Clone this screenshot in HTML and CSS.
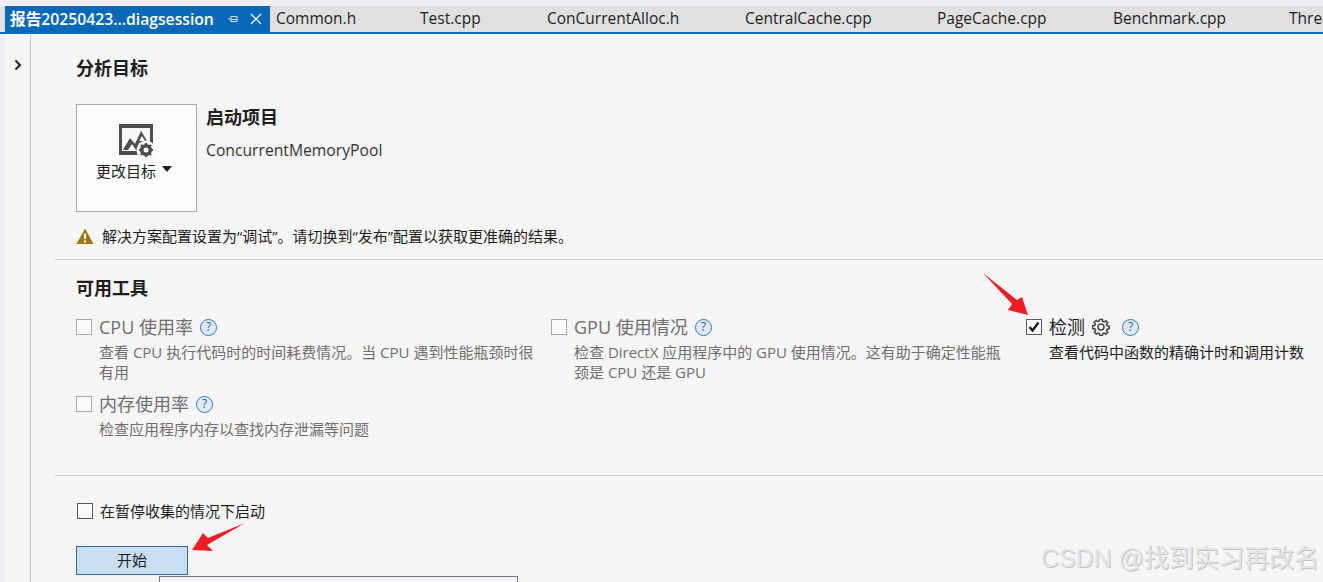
FILE: index.html
```html
<!DOCTYPE html>
<html lang="zh-CN">
<head>
<meta charset="utf-8">
<title>报告</title>
<link rel="stylesheet" href="styles.css">
</head>
<body>
<div class="tabs">
  <div class="tab-active">
    <span class="tab-active-name">报告20250423...diagsession</span>
    <svg class="pin" width="12" height="12" viewBox="0 0 12 12"><path d="M1 6h3M4 3v6M4 3.500h6v5H4M4 6.500h6" fill="none" stroke="#cfe3f5" stroke-width="1"/></svg>
    <svg class="close" width="12" height="12" viewBox="0 0 12 12"><path d="M1 1l10 10M11 1L1 11" fill="none" stroke="#e8f1fa" stroke-width="1.300"/></svg>
  </div>
  <span class="tab t1">Common.h</span>
  <span class="tab t2">Test.cpp</span>
  <span class="tab t3">ConCurrentAlloc.h</span>
  <span class="tab t4">CentralCache.cpp</span>
  <span class="tab t5">PageCache.cpp</span>
  <span class="tab t6">Benchmark.cpp</span>
  <span class="tab t7">ThreadCache.cpp</span>
</div>
<div class="body">
  <aside class="rail">
    <svg width="10" height="12" viewBox="0 0 10 12"><path d="M2.500 1.500L7 6l-4.500 4.500" fill="none" stroke="#1e1e1e" stroke-width="2"/></svg>
  </aside>
  <main class="main">
    <section class="target">
      <h2 class="heading">分析目标</h2>
      <div class="target-row">
        <div class="target-box">
          <svg class="target-icon" width="38" height="36" viewBox="0 0 38 36">
            <path d="M1 1h34v31H1z" fill="#4d4d4d"/>
            <path d="M4 5h28v23H4z" fill="#f8f8f8"/>
            <path d="M5 27l7-12 5 6 6-13 8 13v6z" fill="#4d4d4d"/>
            <path d="M10 27l4-6 4 6zM21 18l3-5 3 5z" fill="#f8f8f8"/>
            <circle cx="28" cy="27" r="9.500" fill="#f8f8f8"/>
            <circle cx="28" cy="27" r="4.600" fill="none" stroke="#4d4d4d" stroke-width="3"/>
            <path d="M28 20v14M21 27h14M23 22l10 10M33 22L23 32" stroke="#4d4d4d" stroke-width="2.200"/>
            <circle cx="28" cy="27" r="2.500" fill="#f8f8f8"/>
          </svg>
          <div class="target-label">更改目标<span class="caret"></span></div>
        </div>
        <div class="target-info">
          <div class="project-title">启动项目</div>
          <div class="project-name">ConcurrentMemoryPool</div>
        </div>
      </div>
      <div class="warning">
        <svg width="18" height="16" viewBox="0 0 18 16"><path d="M9 0.500L17.500 16H0.500z" fill="#9a7a0a"/><path d="M8 5.500h2v5.500H8zM8 12.500h2v2H8z" fill="#fff"/></svg>
        <span>解决方案配置设置为“调试”。请切换到“发布”配置以获取更准确的结果。</span>
      </div>
    </section>
    <section class="tools">
      <h2 class="heading">可用工具</h2>
      <div class="tool-grid">
        <div class="tool-col">
          <div class="tool">
            <div class="tool-head off"><span class="check"></span><span class="tool-name">CPU 使用率</span><span class="help">?</span></div>
            <p class="tool-desc off">查看 CPU 执行代码时的时间耗费情况。当 CPU 遇到性能瓶颈时很有用</p>
          </div>
          <div class="tool">
            <div class="tool-head off"><span class="check"></span><span class="tool-name">内存使用率</span><span class="help">?</span></div>
            <p class="tool-desc off">检查应用程序内存以查找内存泄漏等问题</p>
          </div>
        </div>
        <div class="tool-col">
          <div class="tool">
            <div class="tool-head off"><span class="check"></span><span class="tool-name">GPU 使用情况</span><span class="help">?</span></div>
            <p class="tool-desc off">检查 DirectX 应用程序中的 GPU 使用情况。这有助于确定性能瓶颈是 CPU 还是 GPU</p>
          </div>
        </div>
        <div class="tool-col">
          <div class="tool">
            <div class="tool-head"><span class="check checked"><svg width="14" height="14" viewBox="0 0 14 14"><path d="M2.500 7l3 3.500 6-8" fill="none" stroke="#1e1e1e" stroke-width="2.400"/></svg></span><span class="tool-name">检测</span>
              <svg class="gear" width="18" height="18" viewBox="0 0 18 18"><path d="M7.500 1h3l.4 2.300 1.500.6 1.900-1.300 2.100 2.100-1.300 1.900.6 1.500 2.300.4v3l-2.300.4-.6 1.500 1.300 1.900-2.100 2.100-1.900-1.300-1.500.6-.4 2.300h-3l-.4-2.300-1.500-.6-1.900 1.300-2.100-2.100 1.300-1.900-.6-1.500L-.300 11V8l2.300-.4.600-1.500L1.300 4.200l2.100-2.100 1.900 1.300 1.500-.6z" transform="translate(1 0.500) scale(0.9)" fill="none" stroke="#444" stroke-width="1.700"/><circle cx="9" cy="9" r="3" fill="none" stroke="#444" stroke-width="1.500"/></svg>
              <span class="help">?</span></div>
            <p class="tool-desc on">查看代码中函数的精确计时和调用计数</p>
          </div>
        </div>
      </div>
    </section>
    <section class="start">
      <label class="pause"><span class="check dark"></span><span>在暂停收集的情况下启动</span></label>
      <button class="start-btn">开始</button>
    </section>
  </main>
</div>
<div class="popup"></div>
<svg class="arrow arrow-a" width="50" height="50" viewBox="0 0 50 50"><path d="M2 2L36 29 41 26 47 44 27 39 31 33z" fill="#ee1c25"/></svg>
<svg class="arrow arrow-b" width="56" height="32" viewBox="0 0 56 32"><path d="M54 2L17 17 12 12 1 29 22 30 16 24z" fill="#ee1c25"/></svg>
<div class="watermark">CSDN @找到实习再改名</div>
</body>
</html>
```
FILE: styles.css
```css
* { box-sizing: border-box; }
html, body { height: 100%; }
body {
  margin: 0;
  overflow: hidden;
  position: relative;
  background: #eeeef2;
  color: #1e1e1e;
  font-family: "Open Sans", "Noto Sans CJK SC", sans-serif;
  font-size: 15px;
}
.tabs {
  display: flex;
  height: 34px;
  padding: 6px 0 0 5px;
  background: linear-gradient(#eeeef2 6px, #e0e0e0 6px);
  border-bottom: 2px solid #0e6cb8;
  overflow: hidden;
  white-space: nowrap;
}
.tab-active {
  display: flex;
  align-items: center;
  flex: 0 0 265px;
  height: 26px;
  padding-left: 5px;
  background: #0969b8;
  color: #fff;
}
.tab-active-name { flex: 0 0 215px; padding-bottom: 2px; font-size: 15.700px; font-weight: 600; white-space: nowrap; }
.pin { margin-left: 2px; }
.close { margin-left: 11px; }
.tab { flex: none; line-height: 25px; font-size: 15.500px; }
.t1 { margin-left: 6px; width: 144px; }
.t2 { width: 127px; }
.t3 { width: 198px; }
.t4 { width: 192px; }
.t5 { width: 176px; }
.t6 { width: 176px; }
.body { display: flex; height: 548px; margin-left: 5px; background: #f5f5f5; }
.rail {
  flex: 0 0 26px;
  padding: 21px 0 0 8px;
  border-right: 1px solid #c6c6c6;
}
.main { flex: 1; padding-left: 24px; min-width: 0; }
.heading { margin: 0; padding-left: 21px; font-size: 18px; line-height: 24px; font-weight: 700; }
.target { height: 226px; padding-top: 22px; border-bottom: 1px solid #cfcfcf; }
.target-row { display: flex; margin: 24px 0 0 21px; }
.target-box {
  display: flex;
  flex-direction: column;
  align-items: center;
  width: 121px;
  height: 108px;
  padding: 18px 5px 0 0;
  background: #fcfcfc;
  border: 1px solid #aaa;
}
.target-icon { margin-left: 5px; }
.target-label { margin-top: 2px; font-size: 15px; line-height: 20px; display: flex; align-items: center; }
.caret { width: 0; height: 0; margin: -4px 0 0 6px; border: 5.500px solid transparent; border-top: 6px solid #1e1e1e; border-bottom: 0; }
.target-info { padding: 1px 0 0 9px; }
.project-title { font-size: 18px; font-weight: 700; line-height: 24px; }
.project-name { margin-top: 11px; font-size: 15.700px; line-height: 20px; color: #333; }
.warning { display: flex; align-items: center; gap: 8px; margin: 14px 0 0 21px; font-size: 15px; line-height: 20px; }
.tools { height: 216px; padding-top: 16px; border-bottom: 1px solid #cfcfcf; }
.tool-grid { display: grid; grid-template-columns: 475px 475px 1fr; margin: 15px 0 0 21px; }
.tool { margin-bottom: 10px; }
.tool-head { display: flex; align-items: center; height: 24px; font-size: 18px; }
.off { color: #6f6f6f; }
.check {
  display: inline-flex;
  align-items: center;
  justify-content: center;
  flex: none;
  width: 16px;
  height: 16px;
  margin-right: 7px;
  border: 1px solid #a8a8a8;
  background: #fafafa;
}
.check.checked { border-color: #5a5a5a; }
.check.dark { border-color: #5a5a5a; margin-left: 1px; }
.tool-name { line-height: 24px; }
.help {
  display: inline-flex;
  align-items: center;
  justify-content: center;
  width: 17px;
  height: 17px;
  margin-left: 7px;
  border: 1.500px solid #2f78bc;
  border-radius: 50%;
  background: #dfeaf5;
  color: #2a5f96;
  font-size: 12px;
  line-height: 1;
}
.gear { margin-left: 7px; }
.gear + .help { margin-left: 12px; }
.tool-desc { margin: 3px 0 0 23px; width: 440px; font-size: 15px; line-height: 20px; }
.tool-desc.on { color: #1e1e1e; width: 270px; white-space: nowrap; }
.start { padding: 24px 0 0 21px; }
.pause { display: flex; align-items: center; font-size: 15px; line-height: 22px; }
.start-btn {
  display: block;
  width: 112px;
  height: 29px;
  margin-top: 24px;
  padding: 0 0 2px;
  background: #c9ddf3;
  border: 1px solid #2a6ea5;
  color: #1e1e1e;
  font: inherit;
}
.popup {
  position: absolute;
  left: 159px;
  top: 576px;
  width: 359px;
  height: 30px;
  background: #f5f5fb;
  border: 1px solid #777;
}
.arrow { position: absolute; }
.arrow-a { left: 981px; top: 271px; }
.arrow-b { left: 191px; top: 521px; }
.watermark {
  position: absolute;
  right: 4px;
  bottom: 10px;
  color: #e4e4e4;
  font-family: "Liberation Sans", "Noto Sans CJK SC", sans-serif;
  font-size: 25px;
  line-height: 28px;
  text-shadow: 1px 1px 0 #c4c4c4;
}
```
